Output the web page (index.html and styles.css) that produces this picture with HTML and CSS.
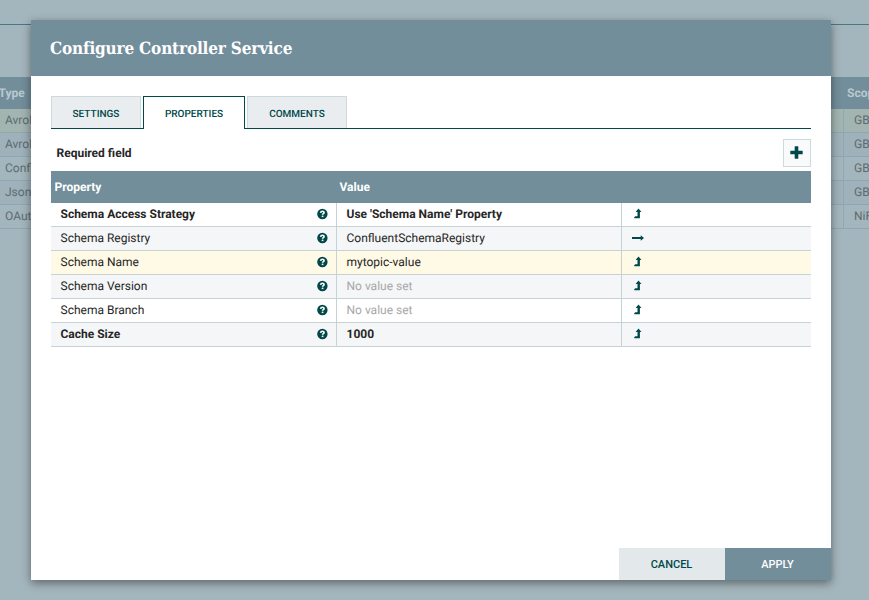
FILE: index.html
```
<!DOCTYPE html>
<html lang="en">
<head>
    <meta charset="UTF-8">
    <title>Configure Controller Service</title>
    <link rel="stylesheet" href="styles.css">
</head>
<body>

    <!-- Icons used in the tables -->
    <svg class="icon-defs" width="0" height="0">
        <symbol id="help" viewBox="0 0 12 12">
            <circle cx="6.4" cy="6" r="5.2" fill="#004849"/>
            <path d="M4.6 4.9C4.8 3.7 5.5 3.3 6.4 3.3c1 0 1.7.5 1.7 1.3 0 1.1-1.5 1.1-1.5 2.1" fill="none" stroke="#fff" stroke-width="1.6"/>
            <rect x="5.7" y="7.6" width="1.7" height="1.5" fill="#fff"/>
        </symbol>
        <symbol id="level-up" viewBox="0 0 8 11">
            <path d="M4.5 0.4L7.5 3.9H5.9V10.2H0.6L0 9.6 1.3 8.3H3.5V3.9H1.6z" fill="#004849"/>
        </symbol>
        <symbol id="arrow-right" viewBox="0 0 12 6">
            <path d="M0 2.1H8.7V0.2L12 3 8.7 5.8V3.9H0z" fill="#004849"/>
        </symbol>
    </svg>

    <!-- Services list behind the dialog -->
    <div class="services">
        <div class="services-top"></div>
        <div class="services-header"><div class="type">Type</div><div class="scope">Scope</div></div>
        <div class="service selected"><div class="type">AvroReader</div><div class="scope">GB</div></div>
        <div class="service"><div class="type">AvroRecord</div><div class="scope">GB</div></div>
        <div class="service"><div class="type">Confluent</div><div class="scope">GB</div></div>
        <div class="service"><div class="type">JsonTree</div><div class="scope">GB</div></div>
        <div class="service"><div class="type">OAuth</div><div class="scope">NiFi</div></div>
    </div>

    <div class="dialog">
        <div class="dialog-header">Configure Controller Service</div>
        <div class="dialog-content">
            <div class="tabs">
                <div class="tab settings">SETTINGS</div>
                <div class="tab properties active">PROPERTIES</div>
                <div class="tab comments">COMMENTS</div>
            </div>
            <div class="toolbar">
                <div class="required">Required field</div>
                <button class="add-property">
                    <svg width="13" height="13" viewBox="0 0 13 13"><path d="M5.2 0.3h2.6q.5 0 .5.5v3.9h3.9q.5 0 .5.5v2.6q0 .5-.5.5H8.3v3.9q0 .5-.5.5H5.2q-.5 0-.5-.5V8.3H.8q-.5 0-.5-.5V5.2q0-.5.5-.5h3.9V.8q0-.5.5-.5z" fill="#004849"/></svg>
                </button>
            </div>
            <div class="table">
                <div class="table-header"><div class="name">Property</div><div class="value">Value</div></div>
                <div class="row bold">
                    <div class="name">Schema Access Strategy<svg class="help"><use href="#help"/></svg></div>
                    <div class="value">Use 'Schema Name' Property</div>
                    <div class="action"><svg class="up"><use href="#level-up"/></svg></div>
                </div>
                <div class="row">
                    <div class="name">Schema Registry<svg class="help"><use href="#help"/></svg></div>
                    <div class="value">ConfluentSchemaRegistry</div>
                    <div class="action"><svg class="right"><use href="#arrow-right"/></svg></div>
                </div>
                <div class="row selected">
                    <div class="name">Schema Name<svg class="help"><use href="#help"/></svg></div>
                    <div class="value">mytopic-value</div>
                    <div class="action"><svg class="up"><use href="#level-up"/></svg></div>
                </div>
                <div class="row">
                    <div class="name">Schema Version<svg class="help"><use href="#help"/></svg></div>
                    <div class="value unset">No value set</div>
                    <div class="action"><svg class="up"><use href="#level-up"/></svg></div>
                </div>
                <div class="row">
                    <div class="name">Schema Branch<svg class="help"><use href="#help"/></svg></div>
                    <div class="value unset">No value set</div>
                    <div class="action"><svg class="up"><use href="#level-up"/></svg></div>
                </div>
                <div class="row bold">
                    <div class="name">Cache Size<svg class="help"><use href="#help"/></svg></div>
                    <div class="value">1000</div>
                    <div class="action"><svg class="up"><use href="#level-up"/></svg></div>
                </div>
            </div>
        </div>
        <div class="dialog-buttons">
            <button class="cancel">CANCEL</button>
            <button class="apply">APPLY</button>
        </div>
    </div>

</body>
</html>
```

FILE: styles.css
```
* {
    margin: 0;
    padding: 0;
    box-sizing: border-box;
}

body {
    font-family: Roboto, sans-serif;
    font-size: 12px;
    color: #262626;
    height: 100vh;
    background-color: #a4b6bd;
    position: relative;
    overflow: hidden;
    text-rendering: geometricPrecision;
}

.icon-defs {
    position: absolute;
}

/* Services list */
.services-top {
    height: 25px;
    margin-bottom: 52px;
    border-bottom: 1px solid #457a83;
}

.services-header,
.service {
    display: flex;
    align-items: center;
    overflow: hidden;
}

.services-header {
    height: 32px;
    background-color: #728e9b;
    color: #b9c9cf;
    font-weight: bold;
}

.services-header .type {
    width: 847px;
    flex: none;
    text-indent: -1.5px;
}

.service {
    height: 24px;
    border-bottom: 1px solid #8da7b3;
    color: #5c6c72;
}

.service:nth-child(even) {
    background-color: #9fb1ba;
}

.service.selected {
    background-color: #a3b5b1;
}

.service .type,
.service .scope {
    height: 23px;
    line-height: 23px;
    flex: none;
}

.service .type {
    width: 844px;
    padding-left: 5px;
    border-right: 1px solid #8da7b3;
}

.service .scope {
    padding-left: 10px;
}

/* Dialog */
.dialog {
    position: absolute;
    top: 20px;
    left: 31px;
    width: 800px;
    height: 560px;
    display: flex;
    flex-direction: column;
    background-color: #fff;
    box-shadow: 0 3px 9px rgba(0, 0, 0, 0.45);
}

.dialog-header {
    height: 56px;
    line-height: 58px;
    padding-left: 19px;
    background-color: #728e9b;
    color: #fff;
    font-family: "Roboto Slab", "DejaVu Serif Condensed", "DejaVu Serif", serif;
    font-stretch: condensed;
    font-size: 17px;
    font-weight: bold;
    letter-spacing: -0.17px;
    white-space: nowrap;
}

.dialog-content {
    flex: 1;
    padding: 20px 20px 0;
}

.tabs {
    display: flex;
    height: 33px;
    border-bottom: 1px solid #004849;
}

.tab {
    height: 32px;
    line-height: 35px;
    border: 1px solid #ccdadb;
    border-bottom: none;
    background-color: #e9edf0;
    color: #004849;
    font-size: 10px;
    font-weight: 500;
    text-align: center;
}

.tab.settings {
    width: 90px;
}

.tab.properties {
    width: 102px;
    margin: 0 2px;
}

.tab.comments {
    width: 100px;
}

.tab.active {
    height: 33px;
    background-color: #fff;
    border-color: #004849;
}

.toolbar {
    display: flex;
    justify-content: space-between;
    height: 42px;
    padding: 10px 0 0 5.5px;
}

.required {
    line-height: 28px;
    font-weight: bold;
}

.add-property {
    width: 28px;
    height: 28px;
    padding: 0 1px 1px 0;
    display: flex;
    align-items: center;
    justify-content: center;
    border: 1px solid #ccdadb;
    background-color: #f9fafb;
}

/* Properties table */
.table-header {
    display: flex;
    height: 32px;
    line-height: 32px;
    background-color: #728e9b;
    color: #fff;
    font-weight: bold;
}

.table-header .name {
    width: 285px;
    padding-left: 3.5px;
}

.table-header .value {
    padding-left: 3.5px;
}

.row {
    display: flex;
    height: 24px;
    line-height: 23px;
    border-bottom: 1px solid #c7d2d7;
}

.row:nth-child(odd) {
    background-color: #f4f6f7;
}

.row.selected {
    background-color: #fffae6;
}

.row.bold {
    font-weight: bold;
}

.row .name {
    display: flex;
    justify-content: space-between;
    width: 286px;
    padding: 0 8px 0 9.5px;
    border-right: 1px solid #c7d2d7;
}

.row .value {
    width: 285px;
    padding-left: 9.5px;
    border-right: 1px solid #c7d2d7;
}

.row .value.unset {
    color: #a8a8a8;
}

.row .action {
    padding-left: 9.5px;
}

.row svg {
    display: block;
}

.help {
    width: 12px;
    height: 12px;
    margin-top: 5px;
}

.up {
    width: 8px;
    height: 11px;
    margin: 5px 0 0 2.5px;
}

.right {
    width: 12px;
    height: 6px;
    margin-top: 8px;
}

/* Buttons */
.dialog-buttons {
    display: flex;
    justify-content: flex-end;
}

.dialog-buttons button {
    width: 106px;
    height: 32px;
    padding-right: 1px;
    border: none;
    font-family: Roboto, sans-serif;
    font-size: 11px;
    font-weight: 500;
}

.cancel {
    background-color: #e3e8eb;
    color: #004849;
}

.apply {
    background-color: #728e9b;
    color: #fff;
}
```
